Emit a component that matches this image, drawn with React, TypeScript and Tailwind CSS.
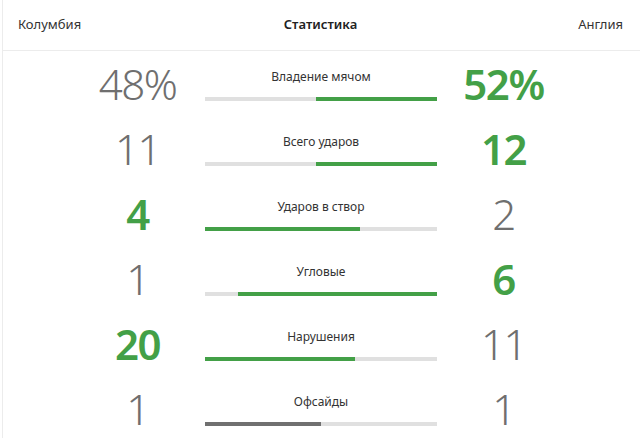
import React from "react";

type Row = { label: string; l: string; r: string; lv: number; rv: number };

const rows: Row[] = [
  { label: "Владение мячом", l: "48%", r: "52%", lv: 48, rv: 52 },
  { label: "Всего ударов", l: "11", r: "12", lv: 11, rv: 12 },
  { label: "Ударов в створ", l: "4", r: "2", lv: 4, rv: 2 },
  { label: "Угловые", l: "1", r: "6", lv: 1, rv: 6 },
  { label: "Нарушения", l: "20", r: "11", lv: 20, rv: 11 },
  { label: "Офсайды", l: "1", r: "1", lv: 1, rv: 1 },
];

const font = { fontFamily: '"Noto Sans", "Open Sans", sans-serif' };

function Num({ v, win }: { v: string; win: boolean }) {
  return (
    <div
      className={
        "text-center text-[42px] leading-none tracking-[-1.5px] " +
        (win ? "font-semibold text-[#43a047]" : "font-light text-[#6f6f6f]")
      }
    >
      {v}
    </div>
  );
}

function StatRow({ row }: { row: Row }) {
  const total = row.lv + row.rv;
  const tie = row.lv === row.rv;
  const leftWin = row.lv > row.rv;
  const pct = ((leftWin || tie ? row.lv : row.rv) / total) * 100;
  return (
    <div className="flex h-[65px] items-center pl-[67px]">
      <div className="w-[135px] pt-[1px]">
        <Num v={row.l} win={!tie && leftWin} />
      </div>
      <div className="flex w-[232px] flex-col pt-[2px]">
        <div className="text-center text-[12px] leading-[16px] text-[#333]">{row.label}</div>
        <div className={"mt-[12px] flex h-[4px] w-full bg-[#e0e0e0] " + (!tie && !leftWin ? "justify-end" : "justify-start")}>
          <div
            className={"h-full " + (tie ? "bg-[#707070]" : "bg-[#43a047]")}
            style={{ width: `${pct}%` }}
          />
        </div>
      </div>
      <div className="w-[133px] pt-[1px]">
        <Num v={row.r} win={!tie && !leftWin} />
      </div>
    </div>
  );
}

export default function App() {
  return (
    <div className="h-[438px] w-[640px] bg-white" style={font}>
      <div className="ml-[2px] h-full border-l border-[#ececec]">
        <div className="grid h-[51px] grid-cols-3 items-center border-b border-[#ececec] pl-[15px] pr-[17px] text-[13px] text-[#333]">
          <span>Колумбия</span>
          <span className="text-center font-semibold text-[#222]">Статистика</span>
          <span className="text-right">Англия</span>
        </div>
        <div>
          {rows.map((r) => (
            <StatRow key={r.label} row={r} />
          ))}
        </div>
      </div>
    </div>
  );
}
